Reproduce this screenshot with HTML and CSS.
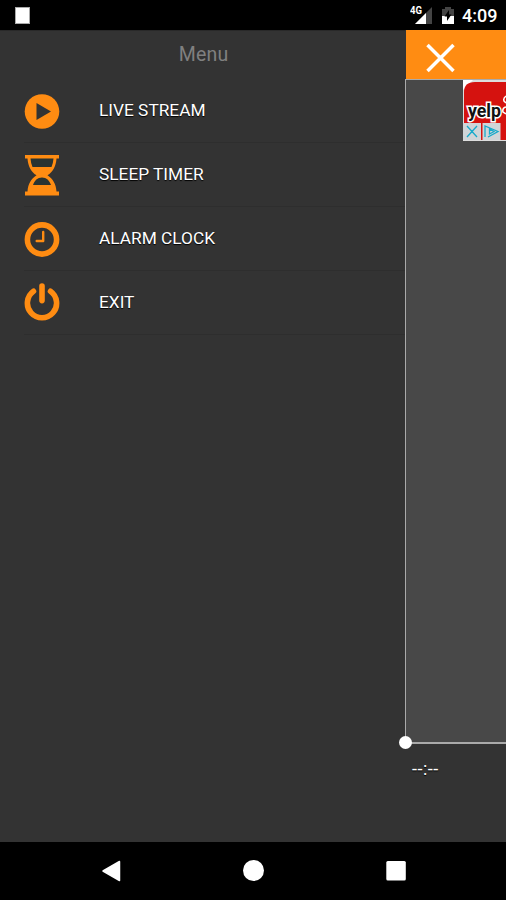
FILE: index.html
```html
<!DOCTYPE html>
<html lang="en">
<head>
<meta charset="utf-8">
<title>Menu</title>
<link rel="stylesheet" href="styles.css">
</head>
<body>
<header class="status">
  <span class="notice"></span>
  <div class="indicators">
    <svg class="signal" width="23" height="20" viewBox="0 0 23 20">
      <path d="M22 2v17H5z" fill="#444"/><path d="M16 8v11H5z" fill="#fff"/>
      <text class="network" x="0" y="9" textLength="12" lengthAdjust="spacingAndGlyphs">4G</text>
    </svg>
    <svg class="battery" width="12" height="20" viewBox="0 0 12 20">
      <path d="M0 4h3V2h6v2h3v7H0z" fill="#444"/><path d="M0 11h12v8H0z" fill="#fff"/>
      <path d="M7 5 2.500 11.500H5V16l4.500-6.500H7z" fill="#000"/>
    </svg>
    <time class="clock">4:09</time>
  </div>
</header>
<main class="screen">
  <nav class="drawer">
    <h1 class="title">Menu</h1>
    <ul class="menu">
      <li class="item">
        <svg width="36" height="42" viewBox="0 0 36 42"><circle cx="18" cy="21.500" r="17.300" fill="#ff8c12"/><path d="M12.500 13 27 21.500l-14.500 8.500z" fill="#333"/></svg>
        <span class="label">LIVE STREAM</span>
      </li>
      <li class="item">
        <svg width="36" height="42" viewBox="0 0 36 42">
          <path d="M1 1h34v3.500h-2.500C32 12 29 18 23.500 21.300 29 25 32 30 32.500 37.500H35v4H1v-4h2.500C4 30 7 25 12.500 21.300 7 18 4 12 3.500 4.500H1z" fill="#ff8c12"/>
          <path d="M6.500 4.500h23q-.3 4.500-2 8.500h-19q-1.700-4-2-8.500zM9 31c1.500-4.500 4.500-7.500 9-7.500s7.500 3 9 7.500z" fill="#293331"/>
        </svg>
        <span class="label">SLEEP TIMER</span>
      </li>
      <li class="item">
        <svg width="36" height="42" viewBox="0 0 36 42" fill="none" stroke="#ff8c12"><circle cx="18" cy="21.500" r="14.600" stroke-width="5.600"/><path d="M19.200 14v9h-6.500" stroke-width="2.400" stroke-linecap="round" stroke-linejoin="round"/></svg>
        <span class="label">ALARM CLOCK</span>
      </li>
      <li class="item">
        <svg width="36" height="42" viewBox="0 0 36 42" fill="none" stroke="#ff8c12" stroke-width="5.600" stroke-linecap="round"><path d="M9.500 9.300A14.600 14.600 0 1 0 26.500 9.300M18 4v14.600"/></svg>
        <span class="label">EXIT</span>
      </li>
    </ul>
  </nav>
  <section class="content">
    <div class="toolbar">
      <svg width="30" height="30" viewBox="0 0 30 30"><path d="M1.500 2 27.500 28M27.500 2 1.500 28" stroke="#fff" stroke-width="3.500"/></svg>
    </div>
    <div class="stage">
      <svg class="ad" width="43" height="61" viewBox="0 0 43 61">
        <path d="M0 0h43v61H0z" fill="#ddd"/><path d="M0 10V0h10z" fill="#fff"/>
        <path d="M1 60V12Q1 2 12 2h31v58z" fill="#d5120f"/>
        <path d="M43 16q-3 2-2 5l2 2M43 27q-4 1-3 5l3 2" fill="none" stroke="#fff" stroke-width="1.500"/>
        <text class="brand" x="5" y="37" textLength="33" lengthAdjust="spacingAndGlyphs">yelp</text>
        <path d="M0 43h18v17H0zM19.500 43h18v17h-18z" fill="#d0d5d8"/>
        <g fill="none" stroke="#17aacb" stroke-width="1.300"><path d="m4 46 10 11M14 46 4 57M22 57V46l13 5.500-10 5.500M26.500 49v5l4.500-2.500z"/></g>
      </svg>
    </div>
    <div class="player">
      <span class="knob"></span>
      <span class="elapsed">--:--</span>
    </div>
  </section>
</main>
<footer class="navbar">
  <svg width="20" height="24" viewBox="0 0 20 24"><path d="M17.500 2.500v19L1 12z" fill="#fff" stroke="#fff" stroke-linejoin="round" stroke-width="1.500"/></svg>
  <svg width="22" height="24" viewBox="0 0 22 24"><circle cx="10.500" cy="11.500" r="10.500" fill="#fff"/></svg>
  <svg width="20" height="24" viewBox="0 0 20 24"><rect x=".3" y="2" width="19.500" height="19.500" rx="1.500" fill="#fff"/></svg>
</footer>
</body>
</html>
```
FILE: styles.css
```css
* { box-sizing: border-box; }
body {
  margin: 0;
  height: 900px;
  display: flex;
  flex-direction: column;
  overflow: hidden;
  background: #000;
  color: #fff;
  font-family: Roboto, "Liberation Sans", sans-serif;
}
svg { display: block; flex: none; }
.status {
  height: 30px;
  flex: none;
  display: flex;
  align-items: flex-start;
  justify-content: space-between;
  padding: 0 9px 0 15px;
}
.notice { width: 15px; height: 17px; margin-top: 7px; background: #fff; border: 1px solid #aaa; }
.indicators { display: flex; align-items: flex-start; padding-top: 5px; }
.battery { margin-left: 9px; }
.network { font-size: 10px; font-weight: 700; fill: #fff; stroke: #000; stroke-width: 2px; paint-order: stroke; }
.clock { margin-left: 8px; width: 35px; font-size: 18px; line-height: 22px; font-weight: 500; white-space: nowrap; }
.screen { height: 812px; flex: none; display: flex; background: #333; }
.drawer { width: 405px; flex: none; border-top: 1px solid #292929; }
.title {
  margin: 0;
  height: 48px;
  padding-left: 2px;
  font-size: 19.500px;
  font-weight: 400;
  line-height: 48px;
  text-align: center;
  color: #808080;
  letter-spacing: .2px;
}
.menu { list-style: none; margin: 0; padding: 0 0 0 24px; }
.item {
  height: 64px;
  display: flex;
  align-items: center;
  gap: 39px;
  border-bottom: 1px solid #2e2e2e;
  font-size: 17.300px;
  text-shadow: 0 1px 1px #000;
}
.label { padding-bottom: 2px; }
.content { flex: 1; min-width: 0; display: flex; flex-direction: column; }
.toolbar { height: 49px; flex: none; padding: 13px 0 0 20px; background: #ff8c12; margin-left: 1px; }
.stage {
  height: 665px;
  flex: none;
  display: flex;
  align-items: flex-start;
  justify-content: flex-end;
  background: #484848;
  border: solid #aaa;
  border-width: 1px 0 2px 1px;
}
.brand { font-size: 18px; font-weight: 700; fill: #111; stroke: #fff; stroke-width: 3px; paint-order: stroke; }
.player { flex: 1; position: relative; padding: 14px 0 0 7px; }
.knob { position: absolute; left: -6px; top: -8px; width: 13px; height: 13px; border-radius: 50%; background: #fff; }
.elapsed { display: block; font-size: 18px; line-height: 21px; letter-spacing: .5px; text-shadow: 0 1px 1px #000; white-space: nowrap; }
.navbar {
  height: 58px;
  flex: none;
  display: flex;
  align-items: center;
  justify-content: space-between;
  padding: 0 100px 0 102px;
}
```
